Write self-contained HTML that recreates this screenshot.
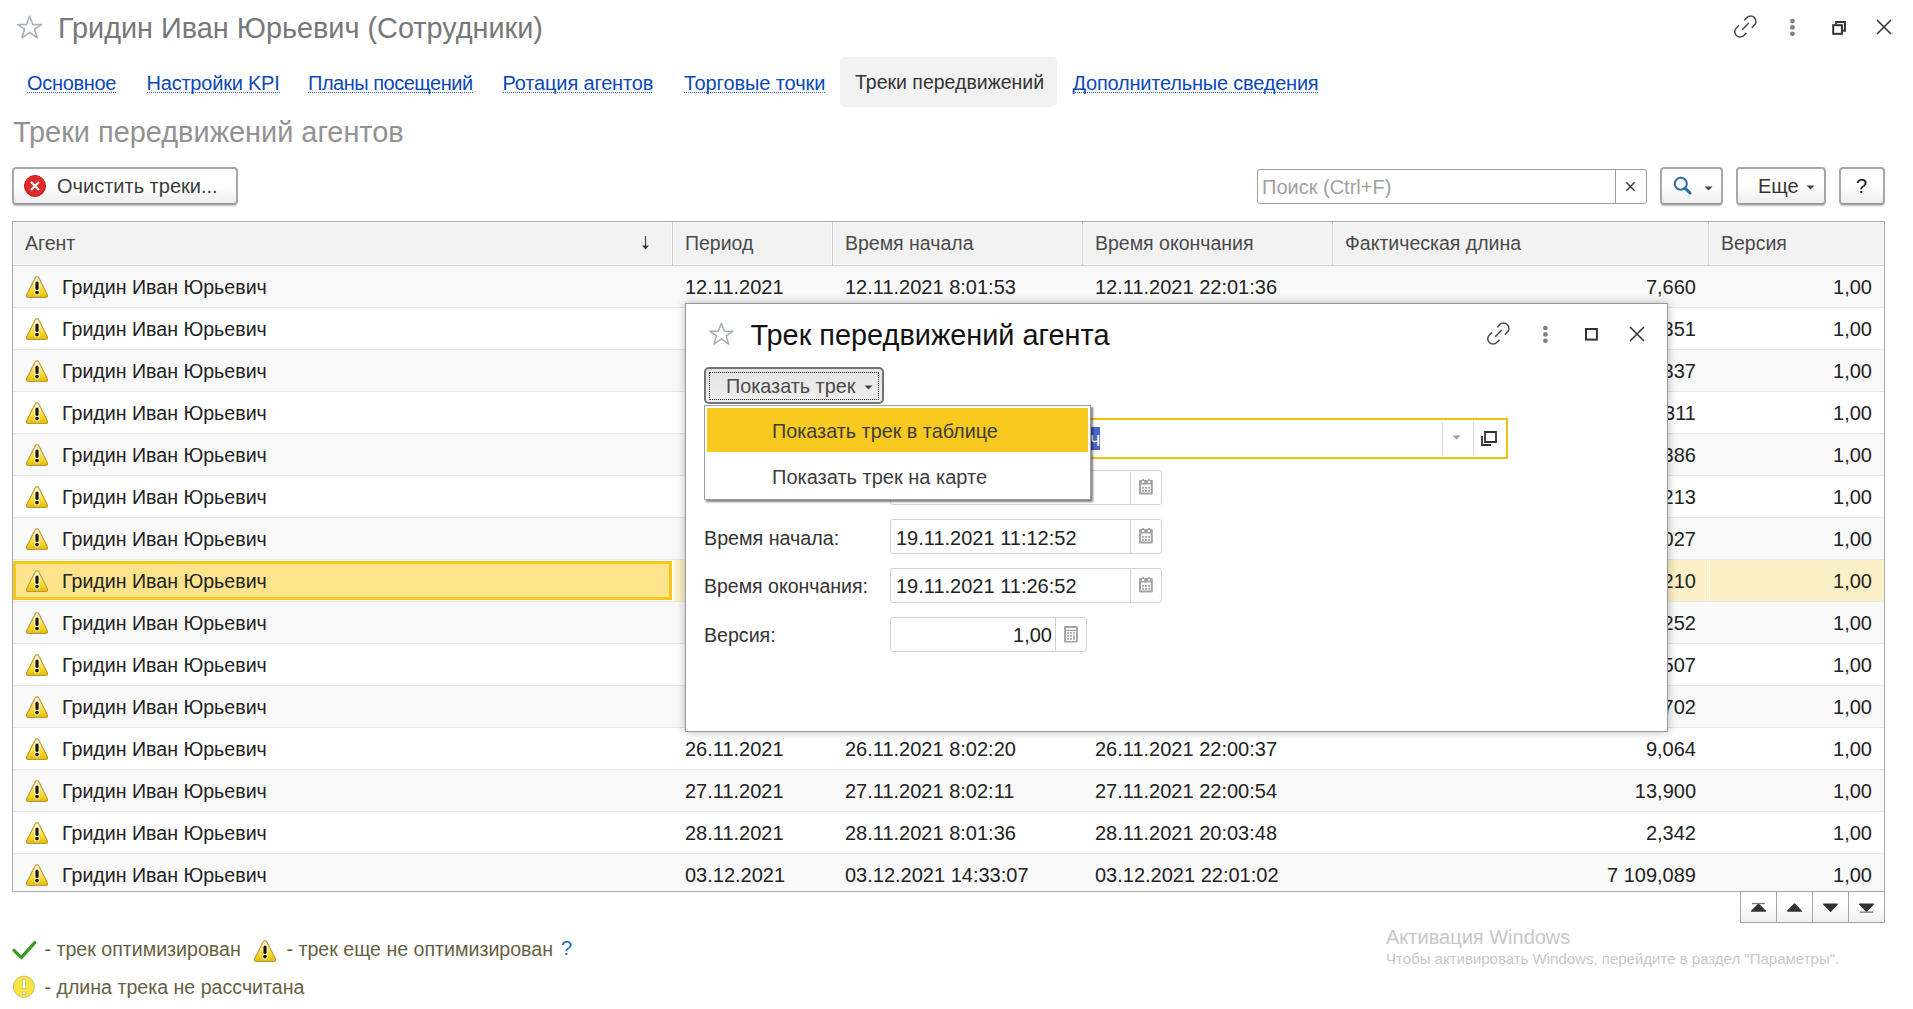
<!DOCTYPE html>
<html><head><meta charset="utf-8">
<style>
html,body{margin:0;padding:0;}
body{width:1913px;height:1009px;overflow:hidden;position:relative;background:#fff;font-family:"Liberation Sans",sans-serif;color:#333;}
.a{position:absolute;}
.t{position:absolute;white-space:nowrap;line-height:1;font-size:20px;}
.lnk{color:#0b48b8;}
.lnk .u{position:absolute;left:0;right:0;top:19px;height:1px;background:repeating-linear-gradient(to right,#3a66c4 0 1px,transparent 1px 2px);}
.btn{position:absolute;box-sizing:border-box;border:2px solid #a8a8a8;border-bottom-color:#9b9b9b;border-radius:4px;background:linear-gradient(#ffffff 0%,#ffffff 50%,#eeeeee 100%);box-shadow:0 2px 0 -0.5px #d6d6d6;}
</style></head><body>

<!-- title -->
<svg class="a" style="left:16px;top:15px" width="27" height="25" viewBox="0 0 27 25"><path d="M13.6 1.3 L16.8 9.5 L25.4 9.6 L18.6 14.2 L21.2 22.8 L13.6 17.4 L6 22.8 L8.6 14.2 L1.8 9.6 L10.4 9.5 Z" fill="none" stroke="#a9b0b7" stroke-width="1.6" stroke-linejoin="round"/></svg>
<div class="t" style="left:58px;top:14px;font-size:28.85px;color:#787878">Гридин Иван Юрьевич (Сотрудники)</div>

<!-- window icons -->
<svg class="a" style="left:1729px;top:10.75px" width="32" height="32" viewBox="0 0 32 32"><g fill="none" stroke="#4a4a4a" stroke-width="1.5" stroke-linecap="butt"><path d="M15.2 9.2 L17.85 6.65 A5.3 5.3 0 0 1 25.35 14.15 L22.8 16.7"/><path d="M9.95 14.35 L7.35 16.95 A5.3 5.3 0 0 0 14.85 24.45 L17.45 21.85"/><path d="M13.2 18.7 L19.8 12"/></g></svg>
<svg class="a" style="left:1787px;top:17px" width="11" height="21" viewBox="0 0 11 21"><circle cx="5.4" cy="4.1" r="2.4" fill="#808080"/><circle cx="5.4" cy="10.4" r="2.4" fill="#808080"/><circle cx="5.4" cy="16.8" r="2.4" fill="#808080"/></svg>
<svg class="a" style="left:1830px;top:19px" width="18" height="18" viewBox="0 0 18 18"><rect x="3.2" y="6.2" width="8.7" height="8.6" fill="none" stroke="#333" stroke-width="2"/><path d="M6.2 5.2 V2.9 H14.9 V11.7 H12.9" fill="none" stroke="#333" stroke-width="2"/></svg>
<svg class="a" style="left:1875px;top:18px" width="18" height="18" viewBox="0 0 18 18"><path d="M2 2 L16 16 M16 2 L2 16" stroke="#333" stroke-width="1.5"/></svg>

<!-- tabs -->
<div class="t lnk" style="left:27.0px;top:73px;letter-spacing:-0.313px">Основное<span class="u"></span></div>
<div class="t lnk" style="left:146.5px;top:73px;letter-spacing:-0.216px">Настройки KPI<span class="u"></span></div>
<div class="t lnk" style="left:308.0px;top:73px;letter-spacing:-0.485px">Планы посещений<span class="u"></span></div>
<div class="t lnk" style="left:502.5px;top:73px;letter-spacing:-0.157px">Ротация агентов<span class="u"></span></div>
<div class="t lnk" style="left:684.0px;top:73px;letter-spacing:-0.093px">Торговые точки<span class="u"></span></div>
<div class="a" style="left:840px;top:57px;width:217px;height:50px;background:#f2f2f2;border-radius:5px"></div>
<div class="t" style="left:855px;top:73px;font-size:19.5px;color:#333">Треки передвижений</div>
<div class="t lnk" style="left:1072.5px;top:73px;letter-spacing:-0.209px">Дополнительные сведения<span class="u"></span></div>

<!-- section title -->
<div class="t" style="left:13px;top:118px;font-size:28.92px;color:#929292">Треки передвижений агентов</div>

<!-- toolbar -->
<div class="btn" style="left:12px;top:167px;width:226px;height:38px"></div>
<svg class="a" style="left:23px;top:174px" width="24" height="24" viewBox="0 0 24 24"><circle cx="12" cy="12" r="10.5" fill="#de2c2c" stroke="#bf1717" stroke-width="1"/><path d="M8 8 L16 16 M16 8 L8 16" stroke="#fff" stroke-width="2"/></svg>
<div class="t" style="left:57px;top:176px;color:#3c3c3c">Очистить треки...</div>

<div class="a" style="left:1257px;top:169px;width:390px;height:35px;box-sizing:border-box;border:1px solid #9e9e9e;border-radius:3px;background:#fff"></div>
<div class="a" style="left:1615px;top:170px;width:1px;height:33px;background:#9e9e9e"></div>
<div class="t" style="left:1262px;top:177px;color:#a0a0a0">Поиск (Ctrl+F)</div>
<svg class="a" style="left:1625px;top:181px" width="11" height="11" viewBox="0 0 11 11"><path d="M1.3 1.3 L9.7 9.7 M9.7 1.3 L1.3 9.7" stroke="#3a3a3a" stroke-width="1.4"/></svg>

<div class="btn" style="left:1660px;top:167px;width:63px;height:38px"></div>
<svg class="a" style="left:1672px;top:175.4px" width="22" height="22" viewBox="0 0 22 22"><circle cx="8.8" cy="8.7" r="6" fill="none" stroke="#2a6ea6" stroke-width="2.1"/><path d="M13 13 L18 18" stroke="#2a6ea6" stroke-width="3" stroke-linecap="round"/></svg>
<svg class="a" style="left:1703.5px;top:186px" width="10" height="6" viewBox="0 0 10 6"><path d="M0.5 0.5 H8.5 L4.5 4.5 Z" fill="#444"/></svg>

<div class="btn" style="left:1736px;top:167px;width:90px;height:38px"></div>
<div class="t" style="left:1758px;top:176px;color:#333">Еще</div>
<svg class="a" style="left:1806px;top:185px" width="10" height="6" viewBox="0 0 10 6"><path d="M0.5 0.5 H8.5 L4.5 4.5 Z" fill="#444"/></svg>

<div class="btn" style="left:1839px;top:167px;width:46px;height:38px"></div>
<div class="t" style="left:1856px;top:176px;color:#111">?</div>

<!-- table -->
<svg width="0" height="0" style="position:absolute"><defs><linearGradient id="wg" x1="0" y1="0" x2="0" y2="1"><stop offset="0" stop-color="#fffbd8"/><stop offset="0.4" stop-color="#fbe778"/><stop offset="0.75" stop-color="#f3d31c"/><stop offset="1" stop-color="#e2b90a"/></linearGradient></defs></svg>
<div class="a" style="left:12px;top:221px;width:1873px;height:671px;box-sizing:border-box;border:1px solid #a9a9a9;background:#fff;overflow:hidden">
<div class="a" style="left:0;top:0;width:1871px;height:43px;background:#f2f2f2;border-bottom:1px solid #d0d0d0"></div>
<div class="a" style="left:0px;top:0;width:659px;height:43px;box-sizing:border-box;border:1px solid #fdfdfd;background:#f2f2f2"></div>
<div class="a" style="left:660px;top:0;width:159px;height:43px;box-sizing:border-box;border:1px solid #fdfdfd;background:#f2f2f2"></div>
<div class="a" style="left:820px;top:0;width:249px;height:43px;box-sizing:border-box;border:1px solid #fdfdfd;background:#f2f2f2"></div>
<div class="a" style="left:1070px;top:0;width:249px;height:43px;box-sizing:border-box;border:1px solid #fdfdfd;background:#f2f2f2"></div>
<div class="a" style="left:1320px;top:0;width:375px;height:43px;box-sizing:border-box;border:1px solid #fdfdfd;background:#f2f2f2"></div>
<div class="a" style="left:1696px;top:0;width:175px;height:43px;box-sizing:border-box;border:1px solid #fdfdfd;background:#f2f2f2"></div>
<div class="a" style="left:659px;top:0;width:1px;height:43px;background:#cdcdcd"></div>
<div class="a" style="left:819px;top:0;width:1px;height:43px;background:#cdcdcd"></div>
<div class="a" style="left:1069px;top:0;width:1px;height:43px;background:#cdcdcd"></div>
<div class="a" style="left:1319px;top:0;width:1px;height:43px;background:#cdcdcd"></div>
<div class="a" style="left:1695px;top:0;width:1px;height:43px;background:#cdcdcd"></div>
<div class="t" style="left:12px;top:12px;font-size:19.5px;color:#4a4a4a">Агент</div>
<div class="t" style="left:672px;top:12px;font-size:19.5px;color:#4a4a4a">Период</div>
<div class="t" style="left:832px;top:12px;font-size:19.5px;color:#4a4a4a">Время начала</div>
<div class="t" style="left:1082px;top:12px;font-size:19.5px;color:#4a4a4a">Время окончания</div>
<div class="t" style="left:1332px;top:12px;font-size:19.5px;color:#4a4a4a">Фактическая длина</div>
<div class="t" style="left:1708px;top:12px;font-size:19.5px;color:#4a4a4a">Версия</div>
<svg class="a" style="left:628px;top:13px" width="10" height="16" viewBox="0 0 10 16"><path d="M4.5 1 V12" stroke="#3a3a3a" stroke-width="1.1"/><path d="M1 10.6 L4.5 14.6 L8 10.6 Z" fill="#3a3a3a"/></svg>
<div class="a" style="left:0;top:44px;width:1871px;height:41px;background:#f9f9f9;border-bottom:1px solid #e6e6e6"></div>
<svg class="a" style="left:12px;top:52px" width="25" height="25" viewBox="0 0 25 25"><path d="M12 2.6 C13 2.6 13.5 3.3 14 4.2 L22.3 20.5 C23.1 22.1 22.5 23.5 20.8 23.5 H3.2 C1.5 23.5 0.9 22.1 1.7 20.5 L10 4.2 C10.5 3.3 11 2.6 12 2.6 Z" fill="url(#wg)" stroke="#b99a3c" stroke-width="1.1"/><path d="M12 9 V14.6" stroke="#fffbe0" stroke-width="5" stroke-linecap="round" opacity=".7"/><path d="M12 9 V14.6" stroke="#111" stroke-width="3.1" stroke-linecap="round"/><circle cx="12" cy="18.6" r="2.9" fill="#fffbe0" opacity=".7"/><circle cx="12" cy="18.6" r="1.8" fill="#111"/></svg>
<div class="t" style="left:49px;top:56px;font-size:19.6px;color:#222">Гридин Иван Юрьевич</div>
<div class="t" style="left:672px;top:55px;color:#222">12.11.2021</div>
<div class="t" style="left:832px;top:55px;color:#222">12.11.2021 8:01:53</div>
<div class="t" style="left:1082px;top:55px;color:#222">12.11.2021 22:01:36</div>
<div class="t" style="left:1320px;width:363px;text-align:right;top:55px;color:#222">7,660</div>
<div class="t" style="left:1696px;width:163px;text-align:right;top:55px;color:#222">1,00</div>
<div class="a" style="left:0;top:86px;width:1871px;height:41px;background:#ffffff;border-bottom:1px solid #e6e6e6"></div>
<svg class="a" style="left:12px;top:94px" width="25" height="25" viewBox="0 0 25 25"><path d="M12 2.6 C13 2.6 13.5 3.3 14 4.2 L22.3 20.5 C23.1 22.1 22.5 23.5 20.8 23.5 H3.2 C1.5 23.5 0.9 22.1 1.7 20.5 L10 4.2 C10.5 3.3 11 2.6 12 2.6 Z" fill="url(#wg)" stroke="#b99a3c" stroke-width="1.1"/><path d="M12 9 V14.6" stroke="#fffbe0" stroke-width="5" stroke-linecap="round" opacity=".7"/><path d="M12 9 V14.6" stroke="#111" stroke-width="3.1" stroke-linecap="round"/><circle cx="12" cy="18.6" r="2.9" fill="#fffbe0" opacity=".7"/><circle cx="12" cy="18.6" r="1.8" fill="#111"/></svg>
<div class="t" style="left:49px;top:98px;font-size:19.6px;color:#222">Гридин Иван Юрьевич</div>
<div class="t" style="left:672px;top:97px;color:#222">15.11.2021</div>
<div class="t" style="left:832px;top:97px;color:#222">15.11.2021 8:00:12</div>
<div class="t" style="left:1082px;top:97px;color:#222">15.11.2021 22:00:41</div>
<div class="t" style="left:1320px;width:363px;text-align:right;top:97px;color:#222">8,351</div>
<div class="t" style="left:1696px;width:163px;text-align:right;top:97px;color:#222">1,00</div>
<div class="a" style="left:0;top:128px;width:1871px;height:41px;background:#f9f9f9;border-bottom:1px solid #e6e6e6"></div>
<svg class="a" style="left:12px;top:136px" width="25" height="25" viewBox="0 0 25 25"><path d="M12 2.6 C13 2.6 13.5 3.3 14 4.2 L22.3 20.5 C23.1 22.1 22.5 23.5 20.8 23.5 H3.2 C1.5 23.5 0.9 22.1 1.7 20.5 L10 4.2 C10.5 3.3 11 2.6 12 2.6 Z" fill="url(#wg)" stroke="#b99a3c" stroke-width="1.1"/><path d="M12 9 V14.6" stroke="#fffbe0" stroke-width="5" stroke-linecap="round" opacity=".7"/><path d="M12 9 V14.6" stroke="#111" stroke-width="3.1" stroke-linecap="round"/><circle cx="12" cy="18.6" r="2.9" fill="#fffbe0" opacity=".7"/><circle cx="12" cy="18.6" r="1.8" fill="#111"/></svg>
<div class="t" style="left:49px;top:140px;font-size:19.6px;color:#222">Гридин Иван Юрьевич</div>
<div class="t" style="left:672px;top:139px;color:#222">16.11.2021</div>
<div class="t" style="left:832px;top:139px;color:#222">16.11.2021 8:01:05</div>
<div class="t" style="left:1082px;top:139px;color:#222">16.11.2021 22:01:12</div>
<div class="t" style="left:1320px;width:363px;text-align:right;top:139px;color:#222">9,337</div>
<div class="t" style="left:1696px;width:163px;text-align:right;top:139px;color:#222">1,00</div>
<div class="a" style="left:0;top:170px;width:1871px;height:41px;background:#ffffff;border-bottom:1px solid #e6e6e6"></div>
<svg class="a" style="left:12px;top:178px" width="25" height="25" viewBox="0 0 25 25"><path d="M12 2.6 C13 2.6 13.5 3.3 14 4.2 L22.3 20.5 C23.1 22.1 22.5 23.5 20.8 23.5 H3.2 C1.5 23.5 0.9 22.1 1.7 20.5 L10 4.2 C10.5 3.3 11 2.6 12 2.6 Z" fill="url(#wg)" stroke="#b99a3c" stroke-width="1.1"/><path d="M12 9 V14.6" stroke="#fffbe0" stroke-width="5" stroke-linecap="round" opacity=".7"/><path d="M12 9 V14.6" stroke="#111" stroke-width="3.1" stroke-linecap="round"/><circle cx="12" cy="18.6" r="2.9" fill="#fffbe0" opacity=".7"/><circle cx="12" cy="18.6" r="1.8" fill="#111"/></svg>
<div class="t" style="left:49px;top:182px;font-size:19.6px;color:#222">Гридин Иван Юрьевич</div>
<div class="t" style="left:672px;top:181px;color:#222">17.11.2021</div>
<div class="t" style="left:832px;top:181px;color:#222">17.11.2021 8:02:33</div>
<div class="t" style="left:1082px;top:181px;color:#222">17.11.2021 22:00:18</div>
<div class="t" style="left:1320px;width:363px;text-align:right;top:181px;color:#222">6,311</div>
<div class="t" style="left:1696px;width:163px;text-align:right;top:181px;color:#222">1,00</div>
<div class="a" style="left:0;top:212px;width:1871px;height:41px;background:#f9f9f9;border-bottom:1px solid #e6e6e6"></div>
<svg class="a" style="left:12px;top:220px" width="25" height="25" viewBox="0 0 25 25"><path d="M12 2.6 C13 2.6 13.5 3.3 14 4.2 L22.3 20.5 C23.1 22.1 22.5 23.5 20.8 23.5 H3.2 C1.5 23.5 0.9 22.1 1.7 20.5 L10 4.2 C10.5 3.3 11 2.6 12 2.6 Z" fill="url(#wg)" stroke="#b99a3c" stroke-width="1.1"/><path d="M12 9 V14.6" stroke="#fffbe0" stroke-width="5" stroke-linecap="round" opacity=".7"/><path d="M12 9 V14.6" stroke="#111" stroke-width="3.1" stroke-linecap="round"/><circle cx="12" cy="18.6" r="2.9" fill="#fffbe0" opacity=".7"/><circle cx="12" cy="18.6" r="1.8" fill="#111"/></svg>
<div class="t" style="left:49px;top:224px;font-size:19.6px;color:#222">Гридин Иван Юрьевич</div>
<div class="t" style="left:672px;top:223px;color:#222">18.11.2021</div>
<div class="t" style="left:832px;top:223px;color:#222">18.11.2021 8:01:47</div>
<div class="t" style="left:1082px;top:223px;color:#222">18.11.2021 22:01:29</div>
<div class="t" style="left:1320px;width:363px;text-align:right;top:223px;color:#222">8,386</div>
<div class="t" style="left:1696px;width:163px;text-align:right;top:223px;color:#222">1,00</div>
<div class="a" style="left:0;top:254px;width:1871px;height:41px;background:#ffffff;border-bottom:1px solid #e6e6e6"></div>
<svg class="a" style="left:12px;top:262px" width="25" height="25" viewBox="0 0 25 25"><path d="M12 2.6 C13 2.6 13.5 3.3 14 4.2 L22.3 20.5 C23.1 22.1 22.5 23.5 20.8 23.5 H3.2 C1.5 23.5 0.9 22.1 1.7 20.5 L10 4.2 C10.5 3.3 11 2.6 12 2.6 Z" fill="url(#wg)" stroke="#b99a3c" stroke-width="1.1"/><path d="M12 9 V14.6" stroke="#fffbe0" stroke-width="5" stroke-linecap="round" opacity=".7"/><path d="M12 9 V14.6" stroke="#111" stroke-width="3.1" stroke-linecap="round"/><circle cx="12" cy="18.6" r="2.9" fill="#fffbe0" opacity=".7"/><circle cx="12" cy="18.6" r="1.8" fill="#111"/></svg>
<div class="t" style="left:49px;top:266px;font-size:19.6px;color:#222">Гридин Иван Юрьевич</div>
<div class="t" style="left:672px;top:265px;color:#222">19.11.2021</div>
<div class="t" style="left:832px;top:265px;color:#222">19.11.2021 8:00:55</div>
<div class="t" style="left:1082px;top:265px;color:#222">19.11.2021 22:00:09</div>
<div class="t" style="left:1320px;width:363px;text-align:right;top:265px;color:#222">5,213</div>
<div class="t" style="left:1696px;width:163px;text-align:right;top:265px;color:#222">1,00</div>
<div class="a" style="left:0;top:296px;width:1871px;height:41px;background:#f9f9f9;border-bottom:1px solid #e6e6e6"></div>
<svg class="a" style="left:12px;top:304px" width="25" height="25" viewBox="0 0 25 25"><path d="M12 2.6 C13 2.6 13.5 3.3 14 4.2 L22.3 20.5 C23.1 22.1 22.5 23.5 20.8 23.5 H3.2 C1.5 23.5 0.9 22.1 1.7 20.5 L10 4.2 C10.5 3.3 11 2.6 12 2.6 Z" fill="url(#wg)" stroke="#b99a3c" stroke-width="1.1"/><path d="M12 9 V14.6" stroke="#fffbe0" stroke-width="5" stroke-linecap="round" opacity=".7"/><path d="M12 9 V14.6" stroke="#111" stroke-width="3.1" stroke-linecap="round"/><circle cx="12" cy="18.6" r="2.9" fill="#fffbe0" opacity=".7"/><circle cx="12" cy="18.6" r="1.8" fill="#111"/></svg>
<div class="t" style="left:49px;top:308px;font-size:19.6px;color:#222">Гридин Иван Юрьевич</div>
<div class="t" style="left:672px;top:307px;color:#222">19.11.2021</div>
<div class="t" style="left:832px;top:307px;color:#222">19.11.2021 9:12:14</div>
<div class="t" style="left:1082px;top:307px;color:#222">19.11.2021 10:40:22</div>
<div class="t" style="left:1320px;width:363px;text-align:right;top:307px;color:#222">1,027</div>
<div class="t" style="left:1696px;width:163px;text-align:right;top:307px;color:#222">1,00</div>
<div class="a" style="left:0;top:338px;width:1871px;height:41px;background:#ffffff;border-bottom:1px solid #e6e6e6"></div>
<div class="a" style="left:660px;top:338px;width:1211px;height:41px;background:#fcf0c6"></div>
<div class="a" style="left:660px;top:338px;width:1px;height:41px;background:#fff"></div>
<div class="a" style="left:820px;top:338px;width:1px;height:41px;background:#fff"></div>
<div class="a" style="left:1070px;top:338px;width:1px;height:41px;background:#fff"></div>
<div class="a" style="left:1320px;top:338px;width:1px;height:41px;background:#fff"></div>
<div class="a" style="left:1696px;top:338px;width:1px;height:41px;background:#fff"></div>
<div class="a" style="left:0;top:339px;width:659px;height:39px;box-sizing:border-box;border:3px solid #f8c71b;background:#fde48c"></div>
<svg class="a" style="left:12px;top:346px" width="25" height="25" viewBox="0 0 25 25"><path d="M12 2.6 C13 2.6 13.5 3.3 14 4.2 L22.3 20.5 C23.1 22.1 22.5 23.5 20.8 23.5 H3.2 C1.5 23.5 0.9 22.1 1.7 20.5 L10 4.2 C10.5 3.3 11 2.6 12 2.6 Z" fill="url(#wg)" stroke="#b99a3c" stroke-width="1.1"/><path d="M12 9 V14.6" stroke="#fffbe0" stroke-width="5" stroke-linecap="round" opacity=".7"/><path d="M12 9 V14.6" stroke="#111" stroke-width="3.1" stroke-linecap="round"/><circle cx="12" cy="18.6" r="2.9" fill="#fffbe0" opacity=".7"/><circle cx="12" cy="18.6" r="1.8" fill="#111"/></svg>
<div class="t" style="left:49px;top:350px;font-size:19.6px;color:#222">Гридин Иван Юрьевич</div>
<div class="t" style="left:672px;top:349px;color:#222">19.11.2021</div>
<div class="t" style="left:832px;top:349px;color:#222">19.11.2021 11:12:52</div>
<div class="t" style="left:1082px;top:349px;color:#222">19.11.2021 11:26:52</div>
<div class="t" style="left:1320px;width:363px;text-align:right;top:349px;color:#222">0,210</div>
<div class="t" style="left:1696px;width:163px;text-align:right;top:349px;color:#222">1,00</div>
<div class="a" style="left:0;top:380px;width:1871px;height:41px;background:#f9f9f9;border-bottom:1px solid #e6e6e6"></div>
<svg class="a" style="left:12px;top:388px" width="25" height="25" viewBox="0 0 25 25"><path d="M12 2.6 C13 2.6 13.5 3.3 14 4.2 L22.3 20.5 C23.1 22.1 22.5 23.5 20.8 23.5 H3.2 C1.5 23.5 0.9 22.1 1.7 20.5 L10 4.2 C10.5 3.3 11 2.6 12 2.6 Z" fill="url(#wg)" stroke="#b99a3c" stroke-width="1.1"/><path d="M12 9 V14.6" stroke="#fffbe0" stroke-width="5" stroke-linecap="round" opacity=".7"/><path d="M12 9 V14.6" stroke="#111" stroke-width="3.1" stroke-linecap="round"/><circle cx="12" cy="18.6" r="2.9" fill="#fffbe0" opacity=".7"/><circle cx="12" cy="18.6" r="1.8" fill="#111"/></svg>
<div class="t" style="left:49px;top:392px;font-size:19.6px;color:#222">Гридин Иван Юрьевич</div>
<div class="t" style="left:672px;top:391px;color:#222">20.11.2021</div>
<div class="t" style="left:832px;top:391px;color:#222">20.11.2021 8:01:22</div>
<div class="t" style="left:1082px;top:391px;color:#222">20.11.2021 22:00:36</div>
<div class="t" style="left:1320px;width:363px;text-align:right;top:391px;color:#222">7,252</div>
<div class="t" style="left:1696px;width:163px;text-align:right;top:391px;color:#222">1,00</div>
<div class="a" style="left:0;top:422px;width:1871px;height:41px;background:#ffffff;border-bottom:1px solid #e6e6e6"></div>
<svg class="a" style="left:12px;top:430px" width="25" height="25" viewBox="0 0 25 25"><path d="M12 2.6 C13 2.6 13.5 3.3 14 4.2 L22.3 20.5 C23.1 22.1 22.5 23.5 20.8 23.5 H3.2 C1.5 23.5 0.9 22.1 1.7 20.5 L10 4.2 C10.5 3.3 11 2.6 12 2.6 Z" fill="url(#wg)" stroke="#b99a3c" stroke-width="1.1"/><path d="M12 9 V14.6" stroke="#fffbe0" stroke-width="5" stroke-linecap="round" opacity=".7"/><path d="M12 9 V14.6" stroke="#111" stroke-width="3.1" stroke-linecap="round"/><circle cx="12" cy="18.6" r="2.9" fill="#fffbe0" opacity=".7"/><circle cx="12" cy="18.6" r="1.8" fill="#111"/></svg>
<div class="t" style="left:49px;top:434px;font-size:19.6px;color:#222">Гридин Иван Юрьевич</div>
<div class="t" style="left:672px;top:433px;color:#222">22.11.2021</div>
<div class="t" style="left:832px;top:433px;color:#222">22.11.2021 8:02:01</div>
<div class="t" style="left:1082px;top:433px;color:#222">22.11.2021 22:01:44</div>
<div class="t" style="left:1320px;width:363px;text-align:right;top:433px;color:#222">8,507</div>
<div class="t" style="left:1696px;width:163px;text-align:right;top:433px;color:#222">1,00</div>
<div class="a" style="left:0;top:464px;width:1871px;height:41px;background:#f9f9f9;border-bottom:1px solid #e6e6e6"></div>
<svg class="a" style="left:12px;top:472px" width="25" height="25" viewBox="0 0 25 25"><path d="M12 2.6 C13 2.6 13.5 3.3 14 4.2 L22.3 20.5 C23.1 22.1 22.5 23.5 20.8 23.5 H3.2 C1.5 23.5 0.9 22.1 1.7 20.5 L10 4.2 C10.5 3.3 11 2.6 12 2.6 Z" fill="url(#wg)" stroke="#b99a3c" stroke-width="1.1"/><path d="M12 9 V14.6" stroke="#fffbe0" stroke-width="5" stroke-linecap="round" opacity=".7"/><path d="M12 9 V14.6" stroke="#111" stroke-width="3.1" stroke-linecap="round"/><circle cx="12" cy="18.6" r="2.9" fill="#fffbe0" opacity=".7"/><circle cx="12" cy="18.6" r="1.8" fill="#111"/></svg>
<div class="t" style="left:49px;top:476px;font-size:19.6px;color:#222">Гридин Иван Юрьевич</div>
<div class="t" style="left:672px;top:475px;color:#222">25.11.2021</div>
<div class="t" style="left:832px;top:475px;color:#222">25.11.2021 8:01:19</div>
<div class="t" style="left:1082px;top:475px;color:#222">25.11.2021 22:00:58</div>
<div class="t" style="left:1320px;width:363px;text-align:right;top:475px;color:#222">9,702</div>
<div class="t" style="left:1696px;width:163px;text-align:right;top:475px;color:#222">1,00</div>
<div class="a" style="left:0;top:506px;width:1871px;height:41px;background:#ffffff;border-bottom:1px solid #e6e6e6"></div>
<svg class="a" style="left:12px;top:514px" width="25" height="25" viewBox="0 0 25 25"><path d="M12 2.6 C13 2.6 13.5 3.3 14 4.2 L22.3 20.5 C23.1 22.1 22.5 23.5 20.8 23.5 H3.2 C1.5 23.5 0.9 22.1 1.7 20.5 L10 4.2 C10.5 3.3 11 2.6 12 2.6 Z" fill="url(#wg)" stroke="#b99a3c" stroke-width="1.1"/><path d="M12 9 V14.6" stroke="#fffbe0" stroke-width="5" stroke-linecap="round" opacity=".7"/><path d="M12 9 V14.6" stroke="#111" stroke-width="3.1" stroke-linecap="round"/><circle cx="12" cy="18.6" r="2.9" fill="#fffbe0" opacity=".7"/><circle cx="12" cy="18.6" r="1.8" fill="#111"/></svg>
<div class="t" style="left:49px;top:518px;font-size:19.6px;color:#222">Гридин Иван Юрьевич</div>
<div class="t" style="left:672px;top:517px;color:#222">26.11.2021</div>
<div class="t" style="left:832px;top:517px;color:#222">26.11.2021 8:02:20</div>
<div class="t" style="left:1082px;top:517px;color:#222">26.11.2021 22:00:37</div>
<div class="t" style="left:1320px;width:363px;text-align:right;top:517px;color:#222">9,064</div>
<div class="t" style="left:1696px;width:163px;text-align:right;top:517px;color:#222">1,00</div>
<div class="a" style="left:0;top:548px;width:1871px;height:41px;background:#f9f9f9;border-bottom:1px solid #e6e6e6"></div>
<svg class="a" style="left:12px;top:556px" width="25" height="25" viewBox="0 0 25 25"><path d="M12 2.6 C13 2.6 13.5 3.3 14 4.2 L22.3 20.5 C23.1 22.1 22.5 23.5 20.8 23.5 H3.2 C1.5 23.5 0.9 22.1 1.7 20.5 L10 4.2 C10.5 3.3 11 2.6 12 2.6 Z" fill="url(#wg)" stroke="#b99a3c" stroke-width="1.1"/><path d="M12 9 V14.6" stroke="#fffbe0" stroke-width="5" stroke-linecap="round" opacity=".7"/><path d="M12 9 V14.6" stroke="#111" stroke-width="3.1" stroke-linecap="round"/><circle cx="12" cy="18.6" r="2.9" fill="#fffbe0" opacity=".7"/><circle cx="12" cy="18.6" r="1.8" fill="#111"/></svg>
<div class="t" style="left:49px;top:560px;font-size:19.6px;color:#222">Гридин Иван Юрьевич</div>
<div class="t" style="left:672px;top:559px;color:#222">27.11.2021</div>
<div class="t" style="left:832px;top:559px;color:#222">27.11.2021 8:02:11</div>
<div class="t" style="left:1082px;top:559px;color:#222">27.11.2021 22:00:54</div>
<div class="t" style="left:1320px;width:363px;text-align:right;top:559px;color:#222">13,900</div>
<div class="t" style="left:1696px;width:163px;text-align:right;top:559px;color:#222">1,00</div>
<div class="a" style="left:0;top:590px;width:1871px;height:41px;background:#ffffff;border-bottom:1px solid #e6e6e6"></div>
<svg class="a" style="left:12px;top:598px" width="25" height="25" viewBox="0 0 25 25"><path d="M12 2.6 C13 2.6 13.5 3.3 14 4.2 L22.3 20.5 C23.1 22.1 22.5 23.5 20.8 23.5 H3.2 C1.5 23.5 0.9 22.1 1.7 20.5 L10 4.2 C10.5 3.3 11 2.6 12 2.6 Z" fill="url(#wg)" stroke="#b99a3c" stroke-width="1.1"/><path d="M12 9 V14.6" stroke="#fffbe0" stroke-width="5" stroke-linecap="round" opacity=".7"/><path d="M12 9 V14.6" stroke="#111" stroke-width="3.1" stroke-linecap="round"/><circle cx="12" cy="18.6" r="2.9" fill="#fffbe0" opacity=".7"/><circle cx="12" cy="18.6" r="1.8" fill="#111"/></svg>
<div class="t" style="left:49px;top:602px;font-size:19.6px;color:#222">Гридин Иван Юрьевич</div>
<div class="t" style="left:672px;top:601px;color:#222">28.11.2021</div>
<div class="t" style="left:832px;top:601px;color:#222">28.11.2021 8:01:36</div>
<div class="t" style="left:1082px;top:601px;color:#222">28.11.2021 20:03:48</div>
<div class="t" style="left:1320px;width:363px;text-align:right;top:601px;color:#222">2,342</div>
<div class="t" style="left:1696px;width:163px;text-align:right;top:601px;color:#222">1,00</div>
<div class="a" style="left:0;top:632px;width:1871px;height:41px;background:#f9f9f9;border-bottom:1px solid #e6e6e6"></div>
<svg class="a" style="left:12px;top:640px" width="25" height="25" viewBox="0 0 25 25"><path d="M12 2.6 C13 2.6 13.5 3.3 14 4.2 L22.3 20.5 C23.1 22.1 22.5 23.5 20.8 23.5 H3.2 C1.5 23.5 0.9 22.1 1.7 20.5 L10 4.2 C10.5 3.3 11 2.6 12 2.6 Z" fill="url(#wg)" stroke="#b99a3c" stroke-width="1.1"/><path d="M12 9 V14.6" stroke="#fffbe0" stroke-width="5" stroke-linecap="round" opacity=".7"/><path d="M12 9 V14.6" stroke="#111" stroke-width="3.1" stroke-linecap="round"/><circle cx="12" cy="18.6" r="2.9" fill="#fffbe0" opacity=".7"/><circle cx="12" cy="18.6" r="1.8" fill="#111"/></svg>
<div class="t" style="left:49px;top:644px;font-size:19.6px;color:#222">Гридин Иван Юрьевич</div>
<div class="t" style="left:672px;top:643px;color:#222">03.12.2021</div>
<div class="t" style="left:832px;top:643px;color:#222">03.12.2021 14:33:07</div>
<div class="t" style="left:1082px;top:643px;color:#222">03.12.2021 22:01:02</div>
<div class="t" style="left:1320px;width:363px;text-align:right;top:643px;color:#222">7 109,089</div>
<div class="t" style="left:1696px;width:163px;text-align:right;top:643px;color:#222">1,00</div>
</div>
<div class="a" style="left:1740px;top:891px;width:145px;height:32px;box-sizing:border-box;border:1px solid #a3a3a3;background:linear-gradient(#ffffff 0%,#ffffff 45%,#efefef 100%)"></div>
<div class="a" style="left:1776px;top:891px;width:1px;height:32px;background:#a3a3a3"></div>
<div class="a" style="left:1812px;top:891px;width:1px;height:32px;background:#a3a3a3"></div>
<div class="a" style="left:1848px;top:891px;width:1px;height:32px;background:#a3a3a3"></div>
<svg class="a" style="left:1740px;top:891px" width="145" height="32" viewBox="0 0 145 32"><g fill="#333" stroke="#333" stroke-width="1.3" stroke-linejoin="round"><path d="M11.5 20.1 L18.5 13.2 L25.5 20.1 Z"/><path d="M47.6 20.1 L54.5 12.9 L61.4 20.1 Z"/><path d="M83.6 13.1 L90.5 20.4 L97.4 13.1 Z"/><path d="M119.5 13.1 L126.5 20.3 L133.5 13.1 Z"/></g><rect x="12" y="11.9" width="13" height="1.3" fill="#777"/><rect x="119.8" y="20.5" width="13.4" height="1.3" fill="#777"/></svg>
<svg class="a" style="left:0px;top:930px" width="50" height="40" viewBox="0 0 50 40"><path d="M14 20.3 L21.3 27.6 L34.8 12.6" fill="none" stroke="#3f9a22" stroke-width="3.3" stroke-linecap="round" stroke-linejoin="round"/></svg>
<div class="t" style="left:44.5px;top:940px;font-size:19.6px;color:#675f44">- трек оптимизирован</div>
<svg class="a" style="left:253px;top:938px" width="25" height="25" viewBox="0 0 25 25"><path d="M12 2.6 C13 2.6 13.5 3.3 14 4.2 L22.3 20.5 C23.1 22.1 22.5 23.5 20.8 23.5 H3.2 C1.5 23.5 0.9 22.1 1.7 20.5 L10 4.2 C10.5 3.3 11 2.6 12 2.6 Z" fill="url(#wg)" stroke="#b99a3c" stroke-width="1.1"/><path d="M12 9 V14.6" stroke="#fffbe0" stroke-width="5" stroke-linecap="round" opacity=".7"/><path d="M12 9 V14.6" stroke="#111" stroke-width="3.1" stroke-linecap="round"/><circle cx="12" cy="18.6" r="2.9" fill="#fffbe0" opacity=".7"/><circle cx="12" cy="18.6" r="1.8" fill="#111"/></svg>
<div class="t" style="left:286.5px;top:940px;font-size:19.6px;color:#675f44">- трек еще не оптимизирован</div>
<div class="t" style="left:561px;top:938px;font-size:20px;color:#1b6fc2">?</div>
<svg class="a" style="left:0px;top:960px" width="50" height="50" viewBox="0 0 50 50"><circle cx="23.9" cy="26.7" r="10.6" fill="#f6e444" stroke="#cdbb6c" stroke-width="0.9"/><rect x="22.35" y="19.2" width="3.1" height="9.6" fill="#fff" stroke="#c4b070" stroke-width="0.6"/><rect x="22.35" y="31.9" width="3.1" height="2.6" fill="#fff" stroke="#c4b070" stroke-width="0.6"/></svg>
<div class="t" style="left:44.5px;top:978px;font-size:19.6px;color:#675f44">- длина трека не рассчитана</div>
<div class="t" style="left:1386px;top:927px;font-size:20px;color:#c8c8c8">Активация Windows</div>
<div class="t" style="left:1386px;top:951px;font-size:15px;color:#c8c8c8">Чтобы активировать Windows, перейдите в раздел "Параметры".</div>
<!-- dialog -->
<div class="a" style="left:685px;top:303px;width:983px;height:429px;box-sizing:border-box;border:1px solid #9a9a9a;background:#fff;box-shadow:0 0 9px rgba(0,0,0,.28)"></div>
<svg class="a" style="left:708px;top:322px" width="26.5" height="24.3" viewBox="0 0 27 25"><path d="M13.6 1.3 L16.8 9.5 L25.4 9.6 L18.6 14.2 L21.2 22.8 L13.6 17.4 L6 22.8 L8.6 14.2 L1.8 9.6 L10.4 9.5 Z" fill="none" stroke="#a9b0b7" stroke-width="1.6" stroke-linejoin="round"/></svg>
<div class="t" style="left:750.5px;top:321px;font-size:28.9px;color:#111">Трек передвижений агента</div>
<svg class="a" style="left:1482px;top:318px" width="32" height="32" viewBox="0 0 32 32"><g fill="none" stroke="#4a4a4a" stroke-width="1.5" stroke-linecap="butt"><path d="M15.2 9.2 L17.85 6.65 A5.3 5.3 0 0 1 25.35 14.15 L22.8 16.7"/><path d="M9.95 14.35 L7.35 16.95 A5.3 5.3 0 0 0 14.85 24.45 L17.45 21.85"/><path d="M13.2 18.7 L19.8 12"/></g></svg>
<svg class="a" style="left:1540px;top:324px" width="11" height="21" viewBox="0 0 11 21"><circle cx="5.4" cy="4.1" r="2.4" fill="#808080"/><circle cx="5.4" cy="10.4" r="2.4" fill="#808080"/><circle cx="5.4" cy="16.8" r="2.4" fill="#808080"/></svg>
<svg class="a" style="left:1583px;top:326px" width="17" height="17" viewBox="0 0 17 17"><rect x="3" y="3" width="10.9" height="10.6" fill="none" stroke="#333" stroke-width="2"/></svg>
<svg class="a" style="left:1628px;top:325px" width="18" height="18" viewBox="0 0 18 18"><path d="M2 2 L16 16 M16 2 L2 16" stroke="#333" stroke-width="1.5"/></svg>

<!-- Показать трек button -->
<div class="a" style="left:704px;top:367px;width:180px;height:37px;box-sizing:border-box;border:2px solid #737373;border-radius:5px;background:linear-gradient(#e4e4e4,#efefef)"></div>
<div class="a" style="left:709px;top:372px;width:170px;height:28px;box-sizing:border-box;border:1px dotted #222"></div>
<div class="t" style="left:726px;top:377px;font-size:19.8px;color:#4a4a4a">Показать трек</div>
<svg class="a" style="left:864px;top:385px" width="10" height="6" viewBox="0 0 10 6"><path d="M0.5 0.5 H8.5 L4.5 4.5 Z" fill="#444"/></svg>

<!-- fields -->
<div class="a" style="left:890px;top:418px;width:618px;height:41px;box-sizing:border-box;border:2px solid #f2c013;background:#fff"></div>
<div class="a" style="left:1080px;top:427px;width:20px;height:23px;background:#4a66c9"></div>
<div class="t" style="left:1090px;top:429px;color:#fff">ч</div>
<div class="a" style="left:1442px;top:422px;width:1px;height:33px;background:#d6d6d6"></div>
<div class="a" style="left:1473px;top:422px;width:1px;height:33px;background:#d6d6d6"></div>
<svg class="a" style="left:1452px;top:435px" width="10" height="6" viewBox="0 0 10 6"><path d="M0.5 0.5 H8.5 L4.5 4.5 Z" fill="#9a9a9a"/></svg>
<svg class="a" style="left:1480px;top:430px" width="18" height="17" viewBox="0 0 18 17"><path d="M5 2 H16 V12 H5 Z" fill="none" stroke="#333" stroke-width="1.8"/><path d="M2 6 V15 H11" fill="none" stroke="#333" stroke-width="1.8"/></svg>

<div class="a" style="left:890px;top:470px;width:272px;height:35px;box-sizing:border-box;border:1px solid #d2d2d2;border-radius:3px;background:#fff"></div>
<div class="a" style="left:1130px;top:472px;width:1px;height:32px;background:#d2d2d2"></div>

<div class="t" style="left:704px;top:528.5px;font-size:19.7px;color:#333">Время начала:</div>
<div class="a" style="left:890px;top:519px;width:272px;height:35px;box-sizing:border-box;border:1px solid #d2d2d2;border-radius:3px;background:#fff"></div>
<div class="a" style="left:1130px;top:520px;width:1px;height:33px;background:#d2d2d2"></div>
<div class="t" style="left:896px;top:528px;color:#222">19.11.2021 11:12:52</div>

<div class="t" style="left:704px;top:577px;font-size:19.5px;color:#333">Время окончания:</div>
<div class="a" style="left:890px;top:568px;width:272px;height:35px;box-sizing:border-box;border:1px solid #d2d2d2;border-radius:3px;background:#fff"></div>
<div class="a" style="left:1130px;top:569px;width:1px;height:33px;background:#d2d2d2"></div>
<div class="t" style="left:896px;top:576px;color:#222">19.11.2021 11:26:52</div>

<div class="t" style="left:704px;top:625.5px;font-size:19.6px;color:#333">Версия:</div>
<div class="a" style="left:890px;top:617px;width:197px;height:35px;box-sizing:border-box;border:1px solid #d2d2d2;border-radius:3px;background:#fff"></div>
<div class="a" style="left:1055px;top:618px;width:1px;height:33px;background:#d2d2d2"></div>
<div class="t" style="left:960px;width:92px;text-align:right;top:625px;color:#222">1,00</div>

<!-- calendar icons -->
<svg class="a" style="left:1125px;top:466px" width="40" height="40" viewBox="0 0 40 40"><g fill="#a2a2a2"><path d="M15.1 13.9 H26.8 Q27.8 13.9 27.8 14.9 V27.6 Q27.8 28.6 26.8 28.6 H15.1 Q14.1 28.6 14.1 27.6 V14.9 Q14.1 13.9 15.1 13.9 Z M16.1 18.6 V26.6 H25.8 V18.6 Z"/><rect x="17.2" y="12.9" width="1.8" height="1.6"/><rect x="23.1" y="12.9" width="1.8" height="1.6"/><rect x="17.1" y="21" width="1.8" height="1.8"/><rect x="20.1" y="21" width="1.8" height="1.8"/><rect x="23.1" y="21" width="1.8" height="1.8"/><rect x="17.1" y="24" width="1.8" height="1.8"/><rect x="20.1" y="24" width="1.8" height="1.8"/><rect x="23.1" y="24" width="1.8" height="1.8"/></g><rect x="16.9" y="15" width="2.3" height="1.9" fill="#fff"/><rect x="22.9" y="15" width="2.3" height="1.9" fill="#fff"/></svg>
<svg class="a" style="left:1125px;top:515px" width="40" height="40" viewBox="0 0 40 40"><g fill="#a2a2a2"><path d="M15.1 13.9 H26.8 Q27.8 13.9 27.8 14.9 V27.6 Q27.8 28.6 26.8 28.6 H15.1 Q14.1 28.6 14.1 27.6 V14.9 Q14.1 13.9 15.1 13.9 Z M16.1 18.6 V26.6 H25.8 V18.6 Z"/><rect x="17.2" y="12.9" width="1.8" height="1.6"/><rect x="23.1" y="12.9" width="1.8" height="1.6"/><rect x="17.1" y="21" width="1.8" height="1.8"/><rect x="20.1" y="21" width="1.8" height="1.8"/><rect x="23.1" y="21" width="1.8" height="1.8"/><rect x="17.1" y="24" width="1.8" height="1.8"/><rect x="20.1" y="24" width="1.8" height="1.8"/><rect x="23.1" y="24" width="1.8" height="1.8"/></g><rect x="16.9" y="15" width="2.3" height="1.9" fill="#fff"/><rect x="22.9" y="15" width="2.3" height="1.9" fill="#fff"/></svg>
<svg class="a" style="left:1125px;top:564px" width="40" height="40" viewBox="0 0 40 40"><g fill="#a2a2a2"><path d="M15.1 13.9 H26.8 Q27.8 13.9 27.8 14.9 V27.6 Q27.8 28.6 26.8 28.6 H15.1 Q14.1 28.6 14.1 27.6 V14.9 Q14.1 13.9 15.1 13.9 Z M16.1 18.6 V26.6 H25.8 V18.6 Z"/><rect x="17.2" y="12.9" width="1.8" height="1.6"/><rect x="23.1" y="12.9" width="1.8" height="1.6"/><rect x="17.1" y="21" width="1.8" height="1.8"/><rect x="20.1" y="21" width="1.8" height="1.8"/><rect x="23.1" y="21" width="1.8" height="1.8"/><rect x="17.1" y="24" width="1.8" height="1.8"/><rect x="20.1" y="24" width="1.8" height="1.8"/><rect x="23.1" y="24" width="1.8" height="1.8"/></g><rect x="16.9" y="15" width="2.3" height="1.9" fill="#fff"/><rect x="22.9" y="15" width="2.3" height="1.9" fill="#fff"/></svg>
<svg class="a" style="left:1050px;top:614px" width="40" height="40" viewBox="0 0 40 40"><g fill="#a2a2a2"><path d="M15.1 11.9 H26.8 Q27.8 11.9 27.8 12.9 V27.6 Q27.8 28.6 26.8 28.6 H15.1 Q14.1 28.6 14.1 27.6 V12.9 Q14.1 11.9 15.1 11.9 Z M16.1 13.9 V15.7 H26 V13.9 Z M16.1 17.1 V27 H26 V17.1 Z"/><rect x="17.1" y="18.1" width="1.8" height="1.8"/><rect x="20" y="18.1" width="1.8" height="1.8"/><rect x="23" y="18.1" width="1.8" height="1.8"/><rect x="17.1" y="21" width="1.8" height="1.8"/><rect x="20" y="21" width="1.8" height="1.8"/><rect x="23.1" y="21.1" width="1.6" height="4.7"/><rect x="17.1" y="24" width="1.8" height="1.8"/><rect x="20" y="24" width="1.8" height="1.8"/></g></svg>

<!-- popup menu -->
<div class="a" style="left:704px;top:405px;width:387px;height:95px;box-sizing:border-box;border:1px solid #a0a0a0;background:#fff;box-shadow:2px 2px 2px rgba(0,0,0,.5)"></div>
<div class="a" style="left:707px;top:408px;width:381px;height:44px;background:#f8ca1f"></div>
<div class="t" style="left:772px;top:422px;font-size:19.8px;color:#3d3d3d">Показать трек в таблице</div>
<div class="t" style="left:772px;top:467px;color:#3d3d3d">Показать трек на карте</div>

</body></html>
